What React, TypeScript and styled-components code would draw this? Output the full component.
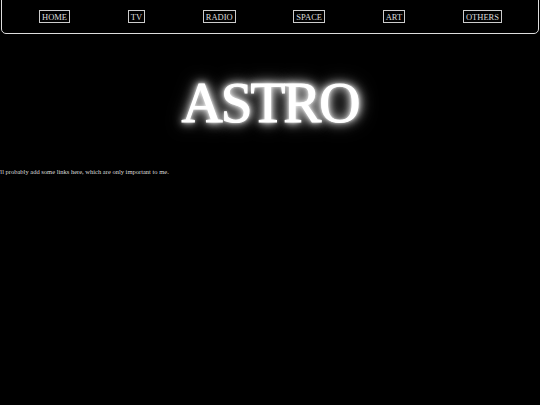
import React from 'react';
import styled, { createGlobalStyle } from 'styled-components';

const GlobalStyle = createGlobalStyle`
    html, body {
        margin: 0;
        padding: 0;
        background: #000;
        color: #eee;
        font-family: "Liberation Serif", "DejaVu Serif", serif;
        overflow: hidden;
    }
`;

const Page = styled.div`
    width: 540px;
    height: 405px;
    background: #000;
    overflow: hidden;
`;

const NavBar = styled.nav`
    margin: -1px 1px 0 1px;
    height: 33px;
    border: 1px solid #ddd;
    border-radius: 0 0 5px 5px;
    display: flex;
    align-items: center;
    justify-content: space-between;
    padding: 0 36px 0 37px;
`;

const NavItem = styled.a`
    display: block;
    border: 1px solid #ccc;
    padding: 1px 2px 0;
    line-height: 10px;
    font-size: 8.5px;
    color: #ddd;
    text-transform: uppercase;
    text-decoration: none;
    margin-top: -1px;
`;

const Title = styled.h1`
    margin: 37px 0 0;
    text-align: center;
    font-size: 57px;
    font-weight: 400;
    letter-spacing: -2px;
    line-height: 64px;
    color: #fff;
    -webkit-text-stroke: 1px #fff;
    text-shadow: 0 0 3px #fff, 0 0 7px #fff, 0 0 12px #fff, 0 0 18px rgba(255, 255, 255, 0.6);
`;

const Note = styled.p`
    margin: 33px 0 0 -3px;
    font-size: 6.5px;
    line-height: 8px;
    color: #ddd;
`;

const links = ['Home', 'TV', 'Radio', 'Space', 'Art', 'Others'];

const App = () => {
    return (
        <>
            <GlobalStyle />
            <Page>
                <NavBar>
                    {links.map((l) => (
                        <NavItem key={l} href="#">
                            {l}
                        </NavItem>
                    ))}
                </NavBar>
                <Title>ASTRO</Title>
                <Note>I'll probably add some links here, which are only important to me.</Note>
            </Page>
        </>
    );
};

export default App;
